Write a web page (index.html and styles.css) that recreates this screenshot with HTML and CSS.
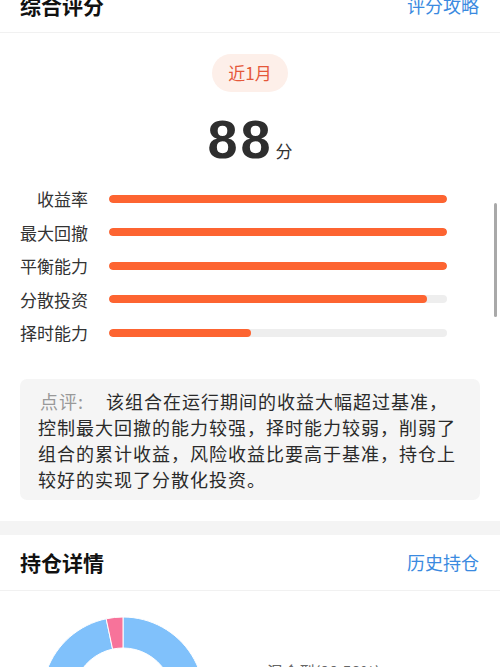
FILE: index.html
```html
<!DOCTYPE html>
<html lang="zh-CN">
<head>
<meta charset="utf-8">
<link rel="stylesheet" href="styles.css">
</head>
<body>
<div class="page">
  <div class="hd hd-first">
    <div class="hd-title">综合评分</div>
    <div class="hd-link">评分攻略</div>
  </div>
  <div class="score">
    <div class="pill">近1月</div>
    <div class="num"><span class="digits">88</span><span class="unit">分</span></div>
  </div>
  <div class="bars">
    <div class="row"><div class="lbl">收益率</div><div class="track"><div class="fill" style="width:100%"></div></div></div>
    <div class="row"><div class="lbl">最大回撤</div><div class="track"><div class="fill" style="width:100%"></div></div></div>
    <div class="row"><div class="lbl">平衡能力</div><div class="track"><div class="fill" style="width:100%"></div></div></div>
    <div class="row"><div class="lbl">分散投资</div><div class="track"><div class="fill" style="width:94%"></div></div></div>
    <div class="row"><div class="lbl">择时能力</div><div class="track"><div class="fill" style="width:42%"></div></div></div>
  </div>
  <div class="comment"><span class="tag">点评:</span>该组合在运行期间的收益大幅超过基准，控制最大回撤的能力较强，择时能力较弱，削弱了组合的累计收益，风险收益比要高于基准，持仓上较好的实现了分散化投资。</div>
  <div class="band"></div>
  <div class="hd">
    <div class="hd-title">持仓详情</div>
    <div class="hd-link">历史持仓</div>
  </div>
  <div class="hold">
    <svg class="donut" width="164" height="164" viewBox="0 0 164 164">
      <path d="M82 1 A81 81 0 1 1 65.16 2.77 L71.6 33.1 A50 50 0 1 0 82 32 Z" fill="#80c1fb" stroke="#fff" stroke-width="1"/>
      <path d="M82 1 A81 81 0 0 0 65.16 2.77 L71.6 33.1 A50 50 0 0 1 82 32 Z" fill="#f7739a" stroke="#fff" stroke-width="1"/>
    </svg>
    <div class="legend">
      <div class="leg-item">混合型(90.58%)</div>
    </div>
  </div>
</div>
<div class="scrollbar"></div>
</body>
</html>
```
FILE: styles.css
```css
html, body {
  margin: 0;
  padding: 0;
  background: #fff;
  font-family: "Noto Sans CJK SC", "Noto Sans", sans-serif;
  color: #333;
  overflow: hidden;
}
.page {
  width: 500px;
}
.hd {
  display: flex;
  justify-content: space-between;
  align-items: center;
  height: 56px;
  padding: 0 21px 0 20px;
  border-bottom: 1px solid #f1f1f1;
  box-sizing: border-box;
}
.hd-first {
  margin-top: -23px;
}
.hd-title {
  font-size: 21px;
  font-weight: 700;
  color: #111;
}
.hd-link {
  font-size: 18px;
  color: #3a8ae0;
}
.score {
  display: flex;
  flex-direction: column;
  align-items: center;
}
.pill {
  margin-top: 21px;
  height: 38px;
  line-height: 38px;
  padding: 0 16px;
  border-radius: 19px;
  background: #fdefe9;
  color: #e5583a;
  font-size: 17px;
}
.num {
  margin-top: 21px;
  display: flex;
  align-items: baseline;
  height: 52px;
}
.digits {
  font-family: "Liberation Sans", Arial, sans-serif;
  font-weight: 700;
  font-size: 54px;
  line-height: 52px;
  letter-spacing: 3px;
  color: #2e2e2e;
}
.unit {
  font-size: 17px;
  line-height: 17px;
  margin-left: 2px;
  color: #333;
}
.bars {
  margin-top: 17px;
}
.row {
  display: flex;
  align-items: center;
  height: 33.5px;
}
.lbl {
  width: 88px;
  text-align: right;
  font-size: 17px;
  color: #333;
  flex: none;
}
.track {
  margin-left: 21px;
  width: 338px;
  height: 8px;
  border-radius: 4px;
  background: #eeeeee;
  overflow: hidden;
}
.fill {
  height: 100%;
  border-radius: 4px;
  background: #fd6431;
}
.comment {
  margin: 29px 20px 0;
  padding: 9px 18px 8px;
  background: #f5f5f5;
  border-radius: 7px;
  font-size: 18px;
  letter-spacing: 1px;
  line-height: 26px;
  color: #2a2a2a;
}
.tag {
  display: inline-block;
  width: 68px;
  padding-left: 2px;
  box-sizing: border-box;
  color: #999;
}
.band {
  margin-top: 21px;
  height: 14px;
  background: #f4f4f4;
}
.hold {
  display: flex;
  padding-left: 41px;
  margin-top: 25px;
}
.donut {
  display: block;
  flex: none;
}
.legend {
  padding-left: 62px;
  padding-top: 43px;
}
.leg-item {
  font-size: 16px;
  color: #666;
}
.scrollbar {
  position: absolute;
  right: 3px;
  top: 203px;
  width: 3px;
  height: 114px;
  border-radius: 2px;
  background: #a9a9a9;
}
```
